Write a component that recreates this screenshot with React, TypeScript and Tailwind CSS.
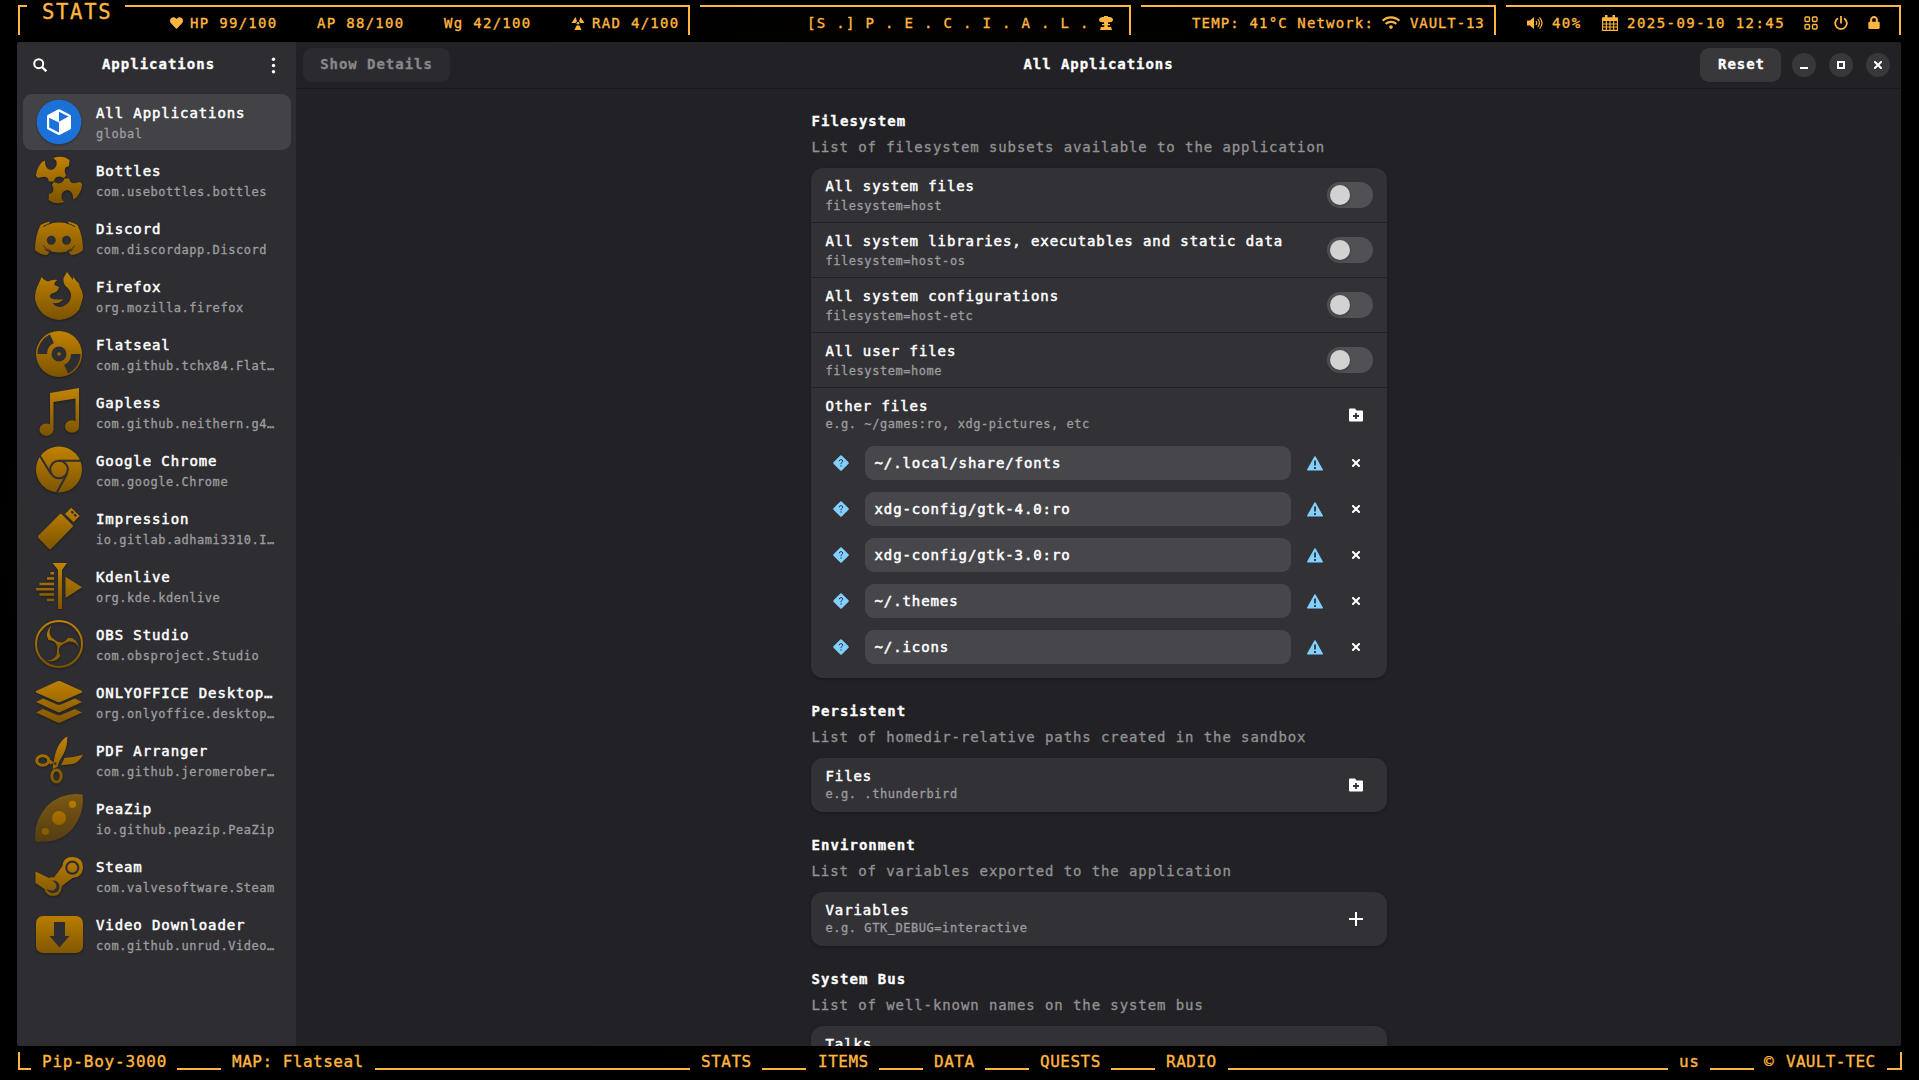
import React from "react";
import { FaHeart, FaLock, FaWifi } from "react-icons/fa";

const G = "url(#amber)";
const BG = "#2e2e32";

function Icon({ children }: { children: React.ReactNode }) {
  return (
    <svg viewBox="0 0 48 48" className="size-12 shrink-0 overflow-visible drop-shadow-[0_1px_1px_rgba(0,0,0,0.35)]" fill={G}>
      {children}
    </svg>
  );
}

const GEAR =
  "M1 18.500 Q2 12 6.500 6.500 L10 4.500 Q9.500 13.500 16 14 Q22.500 13 21.500 5 L18.500 2 Q24 0 30 1.500 L34.500 4 L34 10 L30.500 11.500 Q29 14 30 17 L31 19.500 L29 22 L25 20.500 Q21.500 20.500 20 22.500 L18.500 25.500 L14 25.500 L12.500 22 Q10 20 7.500 21 L3 22 L1 20Z";
const BLADE = "M16.500 5.500 Q9 13 13.500 20 Q21 20.500 22 26 L26 23.500 Q20 20.500 16.500 17.500 Q12.500 12 16.500 5.500Z";

const icons: Record<string, React.ReactNode> = {
  all: (
    <>
      <circle cx="24" cy="24" r="22.300" fill="#1c71d8" />
      <path d="M23 11.500 Q24 11 25 11.500 L35 16.800 Q36 17.500 36 18.500 V30 Q36 31 35 31.500 L25 36.800 Q24 37.300 23 36.800 L13 31.500 Q12 31 12 30 V18.500 Q12 17.500 13 16.800Z" fill="#fff" />
      <path d="M24 13.800 L33.500 18.500 L24 23.700Z M14.200 19.700 L24 24.500 V34.500 L14.200 29.500Z" fill="#1c71d8" />
    </>
  ),
  bottles: (
    <>
      <path d={GEAR} />
      <path d={GEAR} transform="rotate(180 24 24)" fill="url(#amberUp)" />
    </>
  ),
  discord: (
    <>
      <path d="M24 8.500 Q31 8.500 34 10 L33 7.500 Q39 8.500 42.500 11 Q48 22 48 36 Q43 41 36 41 L33.500 38 Q37 37 39.500 34.500 Q32 38.500 24 38.500 Q16 38.500 8.500 34.500 Q11 37 14.500 38 L12 41 Q5 41 0 36 Q0 22 5.500 11 Q9 8.500 15 7.500 L14 10 Q17 8.500 24 8.500Z" />
      <path d="M8 12.800 Q12 10 17 9 M40 12.800 Q36 10 31 9 M8 31.500 Q11 35.500 16 37 M40 31.500 Q37 35.500 32 37" fill="none" stroke={BG} strokeWidth="1" />
      <circle cx="16.300" cy="26.300" r="4.500" fill={BG} />
      <circle cx="31.500" cy="26.300" r="4.500" fill={BG} />
    </>
  ),
  firefox: (
    <path d="M6.500 5 Q9 8.500 13 9.500 Q18 7 22.500 8 Q19 10 19.500 13 L24 15 Q23.500 20 17 21.500 Q14 22.500 15.500 26 Q20 28.500 28 27 Q25 32.500 17.500 31 Q22 36.500 28 34.500 Q36 31 36 23 Q35.500 18 31 14.500 Q28 12 28.500 6 L32 0 L38 8 V4.500 Q41 9 44 11.500 L44.500 14 Q48 20 48 25 Q46 33 44 38 Q37 47 24 48 Q4 46 0 27 Q0 18 4 11Z" />
  ),
  flatseal: (
    <>
      <circle cx="24" cy="24" r="23" />
      <path d="M2.500 24 A21.500 21.500 0 0 1 14.900 4.500 L18.900 13.100 A12 12 0 0 0 12 24Z M45.500 24 A21.500 21.500 0 0 1 33.100 43.500 L29.100 34.900 A12 12 0 0 0 36 24Z" fill={BG} />
      <circle cx="24" cy="24" r="7.500" fill={BG} />
      <circle cx="24" cy="24" r="1.800" />
    </>
  ),
  gapless: (
    <>
      <path d="M15 5 L44 0 V39 H40.500 V10.500 L18.500 14 V42 H15Z" />
      <ellipse cx="11.500" cy="41.700" rx="7" ry="6.200" />
      <ellipse cx="37" cy="38.500" rx="7" ry="6.200" />
    </>
  ),
  chrome: (
    <>
      <circle cx="24" cy="23.500" r="23" />
      <circle cx="24" cy="23.500" r="8.800" fill="none" stroke={BG} strokeWidth="2" />
      <path d="M24 14.700 H46.500 M16 28 L5 10 M32 28 L21.500 47" stroke={BG} strokeWidth="2" fill="none" />
    </>
  ),
  impression: (
    <>
      <path d="M24.500 10.500 Q25.700 9 27 10.500 L37.500 21 Q38.500 22 37.500 23 L16.500 44.500 Q15 46 13.500 44.500 L3.500 34 Q2.500 32.700 3.500 31.500Z" />
      <path d="M36.300 3.700 L44.700 12 L38.500 18.300 L30 10Z" />
      <path d="M35.500 8 l2 2 l1.500 -1.500 l-2 -2Z M38.500 11 l2 2 l1.500 -1.500 l-2 -2Z" fill={BG} />
    </>
  ),
  kdenlive: (
    <path d="M17.700 1 H32 L27 8 V47 H23 V8Z M30.500 14.700 L47 25.300 L30.500 36Z M15.500 10 H19 V12.500 H15.500Z M12 15.300 H19 V17.800 H12Z M4.500 20.700 H19 V23.200 H4.500Z M1 26 H19 V28.500 H1Z M4.500 31.300 H19 V33.800 H4.500Z M12 36.700 H19 V39.200 H12Z" />
  ),
  obs: (
    <>
      <circle cx="24" cy="24" r="23" fill="none" stroke={G} strokeWidth="2" />
      <path d={BLADE} />
      <path d={BLADE} transform="rotate(120 24 24.500)" fill="#966400" />
      <path d={BLADE} transform="rotate(240 24 24.500)" fill="#8a5c00" />
    </>
  ),
  onlyoffice: (
    <path d="M22.500 3.300 Q24 2.700 25.500 3.300 L47 13 V14.500 L25.500 24 Q24 24.500 22.500 24 L1 14.500 V13Z M1 24 L8 20.500 L22 26.500 Q24 27.200 26 26.500 L40 20.500 L47 24 L25.500 34 Q24 34.500 22.500 34Z M1 34.500 L8 31 L22 37 Q24 37.700 26 37 L40 31 L47 34.500 L25.500 44.500 Q24 45 22.500 44.500Z" />
  ),
  pdf: (
    <>
      <path d="M32.300 .5 Q32.500 10 29 17 L24 26 L22.500 31 L17.500 33 L19 24 Q22 6 32.300 .5Z M48 18.700 Q44 26 38 28 L26 29.300 L29.500 22 Q38 21.500 48 18.700Z M13 22 L19 27 L15 28.500Z" />
      <ellipse cx="7.700" cy="24.500" rx="6" ry="4.700" fill="none" stroke={G} strokeWidth="3" />
      <ellipse cx="21.500" cy="40" rx="4.700" ry="6" fill="none" stroke={G} strokeWidth="3" />
      <circle cx="20.300" cy="27.500" r="1.200" fill={BG} />
    </>
  ),
  peazip: (
    <>
      <path d="M47.500 .5 Q50 18 38 34 Q25 50 .5 47.500 Q-2 28 12 12 Q27 -2 47.500 .5Z" opacity=".55" />
      <circle cx="24" cy="24" r="7" />
      <circle cx="37.500" cy="10.300" r="3.600" />
      <circle cx="10.300" cy="37.500" r="3.600" />
    </>
  ),
  steam: (
    <>
      <path d="M0.500 19.500 L14 26 Q17 25 19 25.500 L27.500 14 Q28 5 37.500 5 Q48 5.500 48 15.500 Q47.500 25.500 37.500 26 L27 34 Q26 44 18 44 Q11 43.500 9.500 37 L.5 31Z" />
      <circle cx="37.300" cy="15.700" r="6" fill="none" stroke={BG} strokeWidth="2.200" />
      <path d="M11.500 37 Q14 41.500 18.500 41 Q25 40 24.500 34 Q23.500 28 17 28.500 L20 30.500 Q23 35 19 38 Q17 39.500 11.500 37Z" fill={BG} />
    </>
  ),
  video: (
    <>
      <rect x="1" y="6" width="47" height="37" rx="7" />
      <path d="M19 12 H30 V26 H34.500 L24.500 37.500 L14.500 26 H19Z" fill={BG} />
    </>
  ),
};

const apps = [
  ["all", "All Applications", "global"],
  ["bottles", "Bottles", "com.usebottles.bottles"],
  ["discord", "Discord", "com.discordapp.Discord"],
  ["firefox", "Firefox", "org.mozilla.firefox"],
  ["flatseal", "Flatseal", "com.github.tchx84.Flat…"],
  ["gapless", "Gapless", "com.github.neithern.g4…"],
  ["chrome", "Google Chrome", "com.google.Chrome"],
  ["impression", "Impression", "io.gitlab.adhami3310.I…"],
  ["kdenlive", "Kdenlive", "org.kde.kdenlive"],
  ["obs", "OBS Studio", "com.obsproject.Studio"],
  ["onlyoffice", "ONLYOFFICE Desktop…", "org.onlyoffice.desktop…"],
  ["pdf", "PDF Arranger", "com.github.jeromerober…"],
  ["peazip", "PeaZip", "io.github.peazip.PeaZip"],
  ["steam", "Steam", "com.valvesoftware.Steam"],
  ["video", "Video Downloader", "com.github.unrud.Video…"],
];

const rows = [
  ["All system files", "filesystem=host"],
  ["All system libraries, executables and static data", "filesystem=host-os"],
  ["All system configurations", "filesystem=host-etc"],
  ["All user files", "filesystem=home"],
];

const paths = ["~/.local/share/fonts", "xdg-config/gtk-4.0:ro", "xdg-config/gtk-3.0:ro", "~/.themes", "~/.icons"];

const TITLE = "text-[14px] leading-5 tracking-[0.91px] text-white [-webkit-text-stroke:0.5px_white]";
const SUB = "text-[12px] leading-[18px] tracking-[0.55px] text-[#9d9d9f] [-webkit-text-stroke:0.3px_#9d9d9f]";

function FolderPlus() {
  return (
    <svg viewBox="0 0 14 14" className="h-[14px] w-[14px]">
      <path d="M1 .5 H6 L7.500 2.500 H13 Q14 2.500 14 3.500 V12.500 Q14 13.500 13 13.500 H1 Q0 13.500 0 12.500 V1.500 Q0 .5 1 .5Z" fill="#fff" />
      <path d="M7 5 V11 M4 8 H10" stroke="#323236" strokeWidth="1.800" />
    </svg>
  );
}

function Cross({ size = "size-2" }: { size?: string }) {
  return (
    <svg viewBox="0 0 8 8" className={size}>
      <path d="M1 1 L7 7 M7 1 L1 7" stroke="#fff" strokeWidth="2" strokeLinecap="square" />
    </svg>
  );
}

function AddRow({ title, sub, plus }: { title: string; sub: string; plus?: boolean }) {
  return (
    <div className="flex h-[54px] items-center justify-between pl-[15px] pr-6">
      <div className="self-start pt-2">
        <div className={TITLE}>{title}</div>
        <div className={SUB + " -mt-px"}>{sub}</div>
      </div>
      {plus ? (
        <svg viewBox="0 0 14 14" className="h-[14px] w-[14px]">
          <path d="M7 0 V14 M0 7 H14" stroke="#fff" strokeWidth="2" />
        </svg>
      ) : (
        <FolderPlus />
      )}
    </div>
  );
}

function Section({ title, desc, children }: { title: string; desc: string; children: React.ReactNode }) {
  return (
    <section className="mb-6">
      <h2 className="-mt-px whitespace-nowrap pl-px text-[14px] font-bold leading-5 tracking-[1.05px] text-white [-webkit-text-stroke:0.3px_white]">{title}</h2>
      <p className="mb-[11px] mt-[6px] whitespace-nowrap pl-px text-[14px] leading-5 tracking-[0.91px] text-[#929294] [-webkit-text-stroke:0.3px_#929294]">{desc}</p>
      <div className="overflow-hidden rounded-xl bg-[#323236] shadow-[0_1px_3px_rgba(0,0,0,0.3)]">{children}</div>
    </section>
  );
}

function Stat({ width, children }: { width: string; children: React.ReactNode }) {
  return <div className={"flex shrink-0 items-center whitespace-pre " + width}>{children}</div>;
}

function TopBar() {
  return (
    <div className="flex h-[42px] pl-[18px] pt-[5px] text-[14.500px] text-[#ffb641] [-webkit-text-stroke:0.35px_#ffb641]">
      <div className="h-[30px] w-[9px] border-l-2 border-t-2 border-[#ffb641]" />
      <div className="w-[98px] whitespace-nowrap pl-[15px] text-[20.500px] leading-[14px] tracking-[1.700px]">STATS</div>
      <div className="flex h-[30px] w-[565px] items-center border-r-2 border-t-2 border-[#ffb641] pl-[45px] pt-[3px] text-[14px] leading-5 tracking-[1.300px]">
        <Stat width="w-[147px]">
          <FaHeart className="mr-[7px] h-[14px] w-[13px]" />HP 99/100
        </Stat>
        <Stat width="w-[127px]">AP 88/100</Stat>
        <Stat width="w-[127px]">Wg 42/100</Stat>
        <Stat width="w-[108px]">
          <svg viewBox="0 0 14 14" className="mr-[7px] h-[14px] w-[14px] shrink-0" fill="currentColor">
            <path d="M4.500 1 L0.500 7 H4.500 L6 5.200Z M9.500 1 L13.500 7 H9.500 L8 5.200Z M5.500 9.500 H8.500 L10.500 14 H3.500Z" />
            <circle cx="7" cy="7.300" r="1.300" />
          </svg>
          RAD 4/100
        </Stat>
      </div>
      <div className="ml-[10px] flex h-[30px] w-[431px] items-center whitespace-pre border-r-2 border-t-2 border-[#ffb641] pl-[107px] pt-[3px] text-[14px] leading-5 tracking-[1.320px]">
        [S .] P . E . C . I . A . L .
        <svg viewBox="0 0 14 14" className="ml-[9px] h-[14px] w-[14px] shrink-0" fill="currentColor">
          <path d="M3.500 1 H5 V0 H9 V1 H11 Q14 1.500 14 4 Q13.500 6.200 11 6.200 H9 V8 H11 V9.300 H8.500 L9 11 H12 L13 14 H1 L2 11 H5 L5.500 9.300 H3 V8 H5 V6.200 H3 Q.3 6.200 0 4 Q0 1.500 3.500 1Z" />
        </svg>
      </div>
      <div className="ml-[10px] flex h-[30px] w-[355px] items-center whitespace-pre border-r-2 border-t-2 border-[#ffb641] pl-[51px] pt-[3px] text-[14px] leading-5">
        <span className="w-[190px] tracking-[1.150px]">TEMP: 41°C Network:</span>
        <FaWifi className="mr-[10px] h-[15px] w-[18px] shrink-0" />
        <span className="tracking-[0.900px]">VAULT-13</span>
      </div>
      <div className="ml-[10px] flex h-[30px] w-[395px] items-center whitespace-pre border-r-2 border-t-2 border-[#ffb641] pl-[21px] pt-[3px] text-[14px] leading-5">
        <svg viewBox="0 0 16 14" className="mr-[9px] h-[14px] w-[16px] shrink-0" fill="none" stroke="currentColor" strokeWidth="1.200">
          <path d="M0 4.500 H3 L7 1 V13 L3 9.500 H0Z" fill="currentColor" stroke="none" />
          <path d="M9 5 Q10.500 7 9 9 M10.800 3 Q14 7 10.800 11 M12.500 1.300 Q17.500 7 12.500 12.700" />
        </svg>
        <span className="w-[50px] tracking-[1.400px]">40%</span>
        <svg viewBox="0 0 16 16" className="mr-[9px] h-4 w-4 shrink-0" fill="none" stroke="currentColor" strokeWidth="1.100">
          <path d="M.6 3 H15.400 V15.400 H.6Z M.6 9 H15.400 M.6 12 H15.400 M4.300 6 V15.400 M8 6 V15.400 M11.700 6 V15.400" />
          <path d="M.6 2.500 H15.400 V6 H.6Z M3 0 H5.500 V3 H3Z M10.500 0 H13 V3 H10.500Z" fill="currentColor" stroke="none" />
        </svg>
        <span className="w-[177px] tracking-[1.450px]">2025-09-10 12:45</span>
        <svg viewBox="0 0 14 14" className="mr-4 h-[14px] w-[14px] shrink-0" fill="none" stroke="currentColor" strokeWidth="1.400">
          <rect x="1" y="1" width="4.500" height="4.500" rx="1" />
          <rect x="8.500" y="1" width="4.500" height="4.500" rx="1" />
          <rect x="1" y="8.500" width="4.500" height="4.500" rx="1" />
          <rect x="8.500" y="8.500" width="4.500" height="4.500" rx="1" />
        </svg>
        <svg viewBox="0 0 14 14" className="mr-[20px] h-[14px] w-[14px] shrink-0" fill="none" stroke="currentColor" strokeWidth="1.800">
          <path d="M4 2.300 A5.800 5.800 0 1 0 10 2.300 M7 0 V7.500" />
        </svg>
        <FaLock className="h-[13px] w-[12px] shrink-0" />
      </div>
    </div>
  );
}

function Line({ className }: { className: string }) {
  return <div className={"mt-[22px] h-[2px] shrink-0 bg-[#ffb641] " + className} />;
}

function BottomBar() {
  const text = "shrink-0 whitespace-pre leading-[32px]";
  return (
    <div className="flex h-[34px] pl-[18px] text-[16px] tracking-[0.5px] text-[#ffb641] [-webkit-text-stroke:0.35px_#ffb641]">
      <div className="mt-[6px] h-[18px] w-[13px] shrink-0 border-b-2 border-l-2 border-[#ffb641]" />
      <div className={text + " w-[146px] pl-[11px] tracking-[0.800px]"}>Pip-Boy-3000</div>
      <Line className="w-[44px]" />
      <div className={text + " w-[154px] pl-[11px]"}>MAP: Flatseal</div>
      <Line className="w-[315px]" />
      <div className={text + " w-[72px] pl-[11px]"}>STATS</div>
      <Line className="w-[44px]" />
      <div className={text + " w-[73px] pl-[12px]"}>ITEMS</div>
      <Line className="w-[44px]" />
      <div className={text + " w-[62px] pl-[11px]"}>DATA</div>
      <Line className="w-[44px]" />
      <div className={text + " w-[82px] pl-[11px]"}>QUESTS</div>
      <Line className="w-[44px]" />
      <div className={text + " w-[73px] pl-[11px]"}>RADIO</div>
      <Line className="w-[440px]" />
      <div className={text + " w-[42px] pl-[11px]"}>us</div>
      <Line className="w-[44px]" />
      <div className={text + " flex w-[133px] pl-[10px]"}>
        <span className="w-[22px]">©</span>
        <span className="tracking-[0.300px]">VAULT-TEC</span>
      </div>
      <div className="mt-[6px] h-[18px] w-[15px] shrink-0 border-b-2 border-r-2 border-[#ffb641]" />
    </div>
  );
}

function Sidebar() {
  return (
    <aside className="flex w-[279px] shrink-0 flex-col bg-[#2e2e32]">
      <div className="flex h-[46px] shrink-0 items-center pl-4 pr-5">
        <svg viewBox="0 0 14 14" className="h-[14px] w-[14px]" fill="none" stroke="#fff" strokeWidth="2">
          <circle cx="5.700" cy="5.700" r="4.500" />
          <path d="M9 9 L13.300 13.300" strokeWidth="2.300" />
        </svg>
        <h1 className="-mt-[2px] flex-1 pr-[1px] text-center text-[14px] font-bold tracking-[1px] text-white [-webkit-text-stroke:0.3px_white]">Applications</h1>
        <svg viewBox="0 0 5 17" className="h-[17px] w-[5px]" fill="#fff">
          <circle cx="2.500" cy="2.300" r="1.700" />
          <circle cx="2.500" cy="8.500" r="1.700" />
          <circle cx="2.500" cy="14.700" r="1.700" />
        </svg>
      </div>
      <ul className="mt-[6px] flex flex-col gap-[2px] pl-[6px] pr-[5px]">
        {apps.map(([id, name, sub], i) => (
          <li key={id} className={"flex h-14 items-center rounded-[9px] pl-3 " + (i === 0 ? "bg-[#434347]" : "")}>
            <Icon>{icons[id]}</Icon>
            <div className="ml-[13px] self-start whitespace-nowrap pt-[9px]">
              <div className={TITLE}>{name}</div>
              <div className={SUB + " mt-[2px]"}>{sub}</div>
            </div>
          </li>
        ))}
      </ul>
    </aside>
  );
}

function WinButton({ children }: { children: React.ReactNode }) {
  return <button className="flex size-6 items-center justify-center rounded-full bg-[#38383b]">{children}</button>;
}

export default function App() {
  return (
    <div className="flex h-[1080px] w-[1919px] flex-col overflow-hidden bg-black bg-[radial-gradient(ellipse_at_center,#1c1004_0%,#0e0802_50%,#000_72%)] font-['DejaVu_Sans_Mono',monospace]">
      <svg className="absolute size-0">
        <defs>
          <linearGradient id="amber" gradientUnits="userSpaceOnUse" x1="0" y1="0" x2="0" y2="48">
            <stop offset="0" stopColor="#c28300" />
            <stop offset="1" stopColor="#7a5200" />
          </linearGradient>
          <linearGradient id="amberUp" gradientUnits="userSpaceOnUse" x1="0" y1="48" x2="0" y2="0">
            <stop offset="0" stopColor="#c28300" />
            <stop offset="1" stopColor="#7a5200" />
          </linearGradient>
        </defs>
      </svg>
      <TopBar />
      <div className="ml-[17px] flex h-[1004px] w-[1884px] shrink-0 overflow-hidden rounded-[2px]">
        <Sidebar />
        <main className="flex flex-1 flex-col overflow-hidden bg-[#222226]">
          <header className="flex h-[47px] shrink-0 items-center justify-between border-b border-[#1a1a1d] pl-[7px] pr-[11px] text-[14px] font-bold tracking-[0.95px] text-white [-webkit-text-stroke:0.3px_white]">
            <div className="flex flex-1">
              <button className="h-[34px] w-[147px] rounded-[9px] bg-[#2b2b2f] pb-px text-[#88888a] [-webkit-text-stroke:0.3px_#88888a]">Show Details</button>
            </div>
            <div className="-mt-[2px] pl-[4px]">All Applications</div>
            <div className="flex flex-1 items-center justify-end gap-[13px]">
              <button className="-mr-[2px] h-[34px] w-[81px] rounded-[9px] bg-[#38383b] pb-px pl-[2px]">Reset</button>
              <WinButton>
                <div className="mt-[6px] h-[2px] w-2 bg-white" />
              </WinButton>
              <WinButton>
                <div className="size-2 border-2 border-white" />
              </WinButton>
              <WinButton>
                <Cross />
              </WinButton>
            </div>
          </header>
          <div className="mx-auto min-h-0 w-[576px] flex-1 pt-[23px]">
            <Section title="Filesystem" desc="List of filesystem subsets available to the application">
              {rows.map(([t, s]) => (
                <div key={t} className="flex h-[55px] items-center justify-between border-b border-[#222226] pl-[15px] pr-[14px]">
                  <div className="self-start pt-2">
                    <div className={TITLE + " whitespace-nowrap"}>{t}</div>
                    <div className={SUB + " mt-px"}>{s}</div>
                  </div>
                  <div className="flex h-[26px] w-[46px] items-center rounded-full bg-[#515155] pl-[3px]">
                    <div className="size-5 rounded-full bg-[#d2d2d2] shadow-[0_1px_3px_rgba(0,0,0,0.3)]" />
                  </div>
                </div>
              ))}
              <AddRow title="Other files" sub="e.g. ~/games:ro, xdg-pictures, etc" />
              <div className="flex flex-col gap-3 pb-[14px] pl-[22px] pr-[27px] pt-1">
                {paths.map((p) => (
                  <div key={p} className="flex items-center">
                    <svg viewBox="0 0 16 16" className="size-4 shrink-0">
                      <path d="M7.300 .5 Q8 0 8.700 .5 L15.500 7.300 Q16 8 15.500 8.700 L8.700 15.500 Q8 16 7.300 15.500 L.5 8.700 Q0 8 .5 7.300Z" fill="#81d0ff" />
                      <path d="M6.200 6.300 Q6.300 4.600 8 4.600 Q9.800 4.700 9.700 6.200 Q9.600 7.200 8.400 7.900 Q8 8.200 8 9.200 M8 10.300 V11.700" stroke="#323236" strokeWidth="1" fill="none" />
                    </svg>
                    <div className={TITLE + " ml-4 h-[34px] w-[426px] rounded-[9px] bg-[#47474b] pl-[10px] !leading-[34px]"}>{p}</div>
                    <svg viewBox="0 0 16 15" className="ml-4 h-[15px] w-4 shrink-0">
                      <path d="M7.400 .6 Q8 0 8.600 .6 L16 13.700 Q16 14.500 15.300 14.500 H.7 Q0 14.500 0 13.700Z" fill="#81d0ff" />
                      <path d="M8 4.500 V9.500 M8 11 V13" stroke="#323236" strokeWidth="1.800" />
                    </svg>
                    <div className="ml-[29px]">
                      <Cross />
                    </div>
                  </div>
                ))}
              </div>
            </Section>
            <Section title="Persistent" desc="List of homedir-relative paths created in the sandbox">
              <AddRow title="Files" sub="e.g. .thunderbird" />
            </Section>
            <Section title="Environment" desc="List of variables exported to the application">
              <AddRow title="Variables" sub="e.g. GTK_DEBUG=interactive" plus />
            </Section>
            <Section title="System Bus" desc="List of well-known names on the system bus">
              <AddRow title="Talks" sub="e.g. org.gnome.SessionManager" plus />
            </Section>
          </div>
        </main>
      </div>
      <BottomBar />
    </div>
  );
}
